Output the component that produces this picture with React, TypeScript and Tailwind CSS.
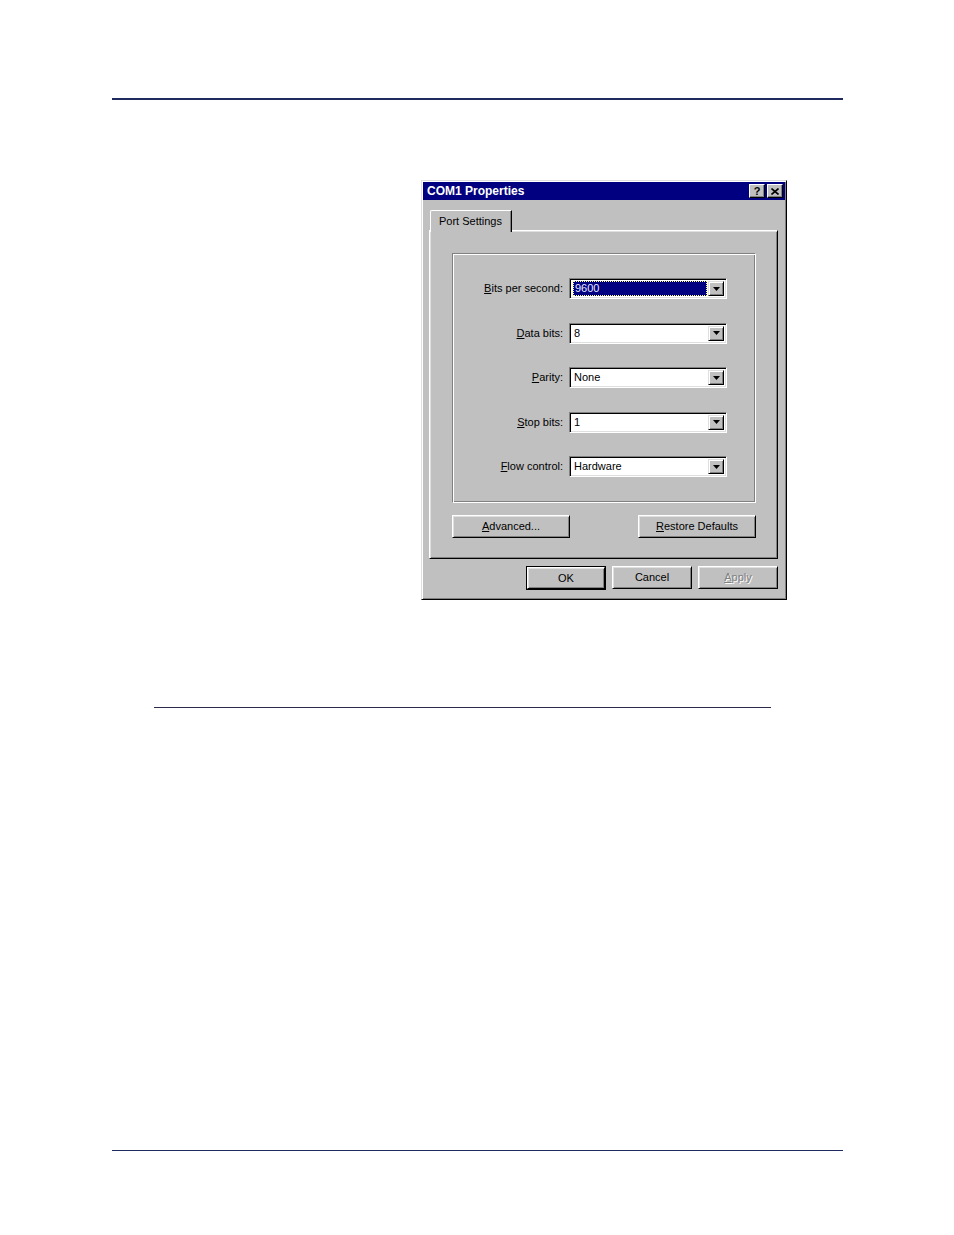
import React from 'react'

const FONT = { fontFamily: '"Liberation Sans", Arial, sans-serif' }

function Arrow() {
  return (
    <svg width="7" height="4" viewBox="0 0 7 4" className="block">
      <path d="M0 0h7L3.5 4z" fill="#000" />
    </svg>
  )
}

function Combo({ value, active }: { value: string; active?: boolean }) {
  return (
    <div className="w-[158px] h-[21px] flex border border-t-[#808080] border-l-[#808080] border-r-white border-b-white shadow-[inset_1px_1px_0_#000,inset_-1px_-1px_0_#dfdfdf] p-[2px] bg-white">
      <div className="flex-1 flex items-center pl-[1px] pr-[1px] min-w-0">
        {active ? (
          <div className="w-full h-[15px] bg-[#000080] border border-dotted border-[#ffff80] flex items-center pl-[1px] text-[#e8e8ff] text-[11px] leading-none">
            {value}
          </div>
        ) : (
          <span className="text-[11px] leading-none text-black pl-[1px]">{value}</span>
        )}
      </div>
      <div className="w-[16px] h-full bg-[#c0c0c0] border border-t-[#dfdfdf] border-l-[#dfdfdf] border-r-black border-b-black shadow-[inset_1px_1px_0_#fff,inset_-1px_-1px_0_#808080] flex items-center justify-center">
        <Arrow />
      </div>
    </div>
  )
}

function Btn({ children, w, def, disabled }: { children: React.ReactNode; w: string; def?: boolean; disabled?: boolean }) {
  const inner = (
    <div
      className={`${def ? 'w-full' : w} h-full bg-[#c0c0c0] border border-t-white border-l-white border-r-black border-b-black shadow-[inset_1px_1px_0_#dfdfdf,inset_-1px_-1px_0_#808080] flex items-center justify-center text-[11px] ${disabled ? 'text-[#808080] [text-shadow:1px_1px_0_#fff]' : 'text-black'}`}
    >
      {children}
    </div>
  )
  if (def) {
    return <div className={`${w} h-[24px] border border-black`}>{inner}</div>
  }
  return <div className="h-[23px]">{inner}</div>
}

const rows: { label: React.ReactNode; value: string; active?: boolean }[] = [
  { label: <><u>B</u>its per second:</>, value: '9600', active: true },
  { label: <><u>D</u>ata bits:</>, value: '8' },
  { label: <><u>P</u>arity:</>, value: 'None' },
  { label: <><u>S</u>top bits:</>, value: '1' },
  { label: <><u>F</u>low control:</>, value: 'Hardware' },
]

export default function App() {
  return (
    <div className="w-[954px] h-[1235px] bg-white pt-[98px]" style={FONT}>
      <div className="ml-[112px] w-[731px] h-[2px] bg-[#1f2a5e]" />

      {/* Dialog */}
      <div className="mt-[80px] ml-[421px] w-[366px] h-[420px] bg-[#c0c0c0] border border-t-[#dfdfdf] border-l-[#dfdfdf] border-r-black border-b-black shadow-[inset_1px_1px_0_#fff,inset_-1px_-1px_0_#808080] p-[1px] flex flex-col">
        {/* Title bar */}
        <div className="h-[18px] bg-[#000080] flex items-center justify-between pl-[4px] pr-[2px]">
          <span className="text-white font-bold text-[12px] leading-none">COM1 Properties</span>
          <div className="flex gap-[2px]">
            <div className="w-[16px] h-[14px] bg-[#c0c0c0] border border-t-white border-l-white border-r-black border-b-black shadow-[inset_-1px_-1px_0_#808080] flex items-center justify-center text-[11px] font-bold leading-none text-black">?</div>
            <div className="w-[16px] h-[14px] bg-[#c0c0c0] border border-t-white border-l-white border-r-black border-b-black shadow-[inset_-1px_-1px_0_#808080] flex items-center justify-center">
              <svg width="8" height="7" viewBox="0 0 8 7">
                <path d="M0.5 0.5L7.5 6.5M7.5 0.5L0.5 6.5" stroke="#000" strokeWidth="1.6" />
              </svg>
            </div>
          </div>
        </div>

        {/* Tabs */}
        <div className="mt-[10px] pl-[6px] pr-[7px] flex flex-col">
          <div className="ml-[1px] w-[82px] h-[22px] bg-[#c0c0c0] border-t border-l border-t-white border-l-white border-r border-r-black shadow-[inset_-1px_0_0_#808080] rounded-tl-[2px] flex items-start pt-[2px] pl-[8px] text-[11px] text-black relative z-10 -mb-[2px]">
            Port Settings
          </div>
          <div className="h-[329px] border border-t-white border-l-white border-r-black border-b-black shadow-[inset_1px_1px_0_#dfdfdf,inset_-1px_-1px_0_#808080] pt-[22px] pl-[22px] pr-[21px] flex flex-col">
            {/* Group */}
            <div className="h-[250px] border border-t-[#808080] border-l-[#808080] border-r-white border-b-white shadow-[inset_1px_1px_0_#fff,inset_-1px_-1px_0_#808080] pt-[24px] flex flex-col gap-[23.5px]">
              {rows.map((r, i) => (
                <div key={i} className="flex items-center h-[21px]">
                  <div className="w-[110px] text-right text-[11px] text-black">{r.label}</div>
                  <div className="ml-[6px]">
                    <Combo value={r.value} active={r.active} />
                  </div>
                </div>
              ))}
            </div>
            <div className="mt-[12px] flex justify-between">
              <Btn w="w-[118px]"><span><u>A</u>dvanced...</span></Btn>
              <Btn w="w-[118px]"><span><u>R</u>estore Defaults</span></Btn>
            </div>
          </div>
        </div>

        {/* Bottom buttons */}
        <div className="mt-[7px] flex justify-end gap-[6px] pr-[7px]">
          <Btn w="w-[80px]" def>OK</Btn>
          <Btn w="w-[80px]">Cancel</Btn>
          <Btn w="w-[80px]" disabled><span><u>A</u>pply</span></Btn>
        </div>
      </div>

      <div className="mt-[107px] ml-[154px] w-[617px] h-px bg-[#2a2a4a]" />
      <div className="mt-[442px] ml-[112px] w-[731px] h-px bg-[#1f2a5e]" />
    </div>
  )
}
